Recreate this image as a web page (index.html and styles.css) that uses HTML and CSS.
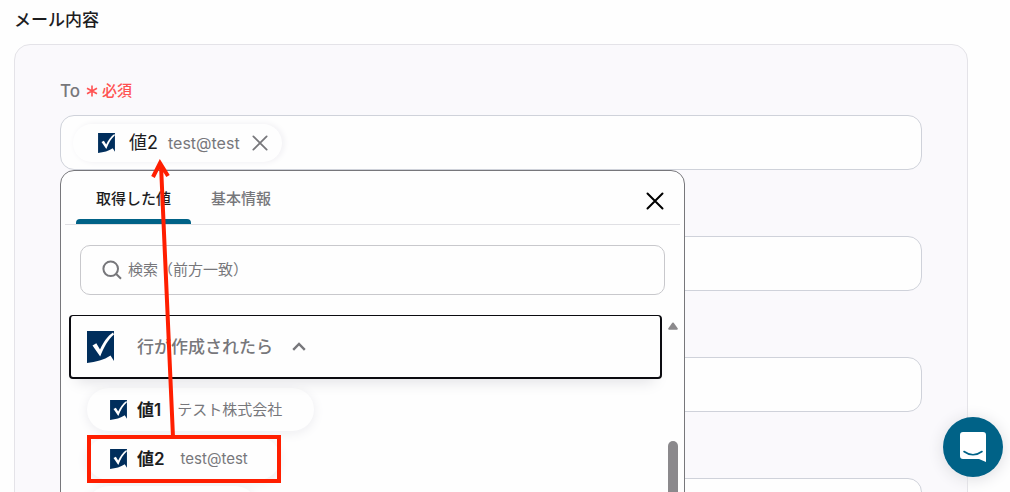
FILE: index.html
```html
<!DOCTYPE html>
<html lang="ja">
<head>
<meta charset="utf-8">
<meta name="viewport" content="width=device-width, initial-scale=1">
<title>メール内容</title>
<link rel="stylesheet" href="styles.css">
</head>
<body>
<svg class="defs" aria-hidden="true">
  <symbol id="logo" viewBox="0 0 27 32">
    <path fill="#002e5c" d="M0 0H27V30L23.500 24.500C17 29 9 31 0 32Z"/>
    <path fill="#fff" d="M5.500 14.500L9.300 12.200L13 18.500C16.500 11 20.500 5 26 1.500L27 3.500C21 8.500 17 16 13.200 25.500Z"/>
  </symbol>
  <symbol id="cross" viewBox="0 0 18 18">
    <path d="M1.500 1.500L16.500 16.500M16.500 1.500L1.500 16.500" fill="none" stroke="currentColor" stroke-width="2" stroke-linecap="round"/>
  </symbol>
</svg>
<main class="page">
  <h1 class="page-title">メール内容</h1>
  <form class="panel">
    <div class="field-label"><label for="to">To</label>
      <span class="required"><svg class="asterisk" viewBox="0 0 12 12" aria-hidden="true"><path d="M6 .5V11.500M1 3.200L11 8.800M11 3.200L1 8.800"/></svg>必須</span>
    </div>
    <div class="fields">
      <div class="field field-open">
        <div class="selected">
          <svg class="logo"><use href="#logo"/></svg>
          <span class="selected-name">値2</span>
          <span class="selected-value">test@test</span>
          <button class="remove" type="button" aria-label="削除"><svg><use href="#cross"/></svg></button>
        </div>
        <input class="bare" id="to" type="text">
        <section class="popup">
          <header class="popup-head">
            <div class="tabs" role="tablist">
              <button class="tab tab-active" type="button" role="tab" aria-selected="true">取得した値</button>
              <button class="tab" type="button" role="tab" aria-selected="false">基本情報</button>
            </div>
            <button class="close" type="button" aria-label="閉じる"><svg><use href="#cross"/></svg></button>
          </header>
          <label class="search">
            <svg class="search-icon" viewBox="0 0 20 20" aria-hidden="true"><path d="M16 8.800A7.300 7.300 0 1 1 1.400 8.800A7.300 7.300 0 1 1 16 8.800M14.200 14L19 18.800"/></svg>
            <input class="search-input" type="search" aria-label="検索" placeholder="検索（前方一致）">
          </label>
          <div class="results">
            <div class="result-list">
              <button class="group" type="button" aria-expanded="true">
                <svg class="group-logo"><use href="#logo"/></svg>
                <span>行が作成されたら</span>
                <svg class="chevron" viewBox="0 0 14 9" aria-hidden="true"><path d="M1.200 7.800L7 2L12.800 7.800"/></svg>
              </button>
              <div class="chips">
                <button class="chip" type="button"><svg class="logo"><use href="#logo"/></svg><b>値1</b><span>テスト株式会社</span></button>
                <button class="chip" type="button"><svg class="logo"><use href="#logo"/></svg><b>値2</b><span>test@test</span></button>
                <button class="chip chip-short" type="button" aria-label="次の値"></button>
              </div>
            </div>
            <div class="scrollbar" aria-hidden="true">
              <svg class="scroll-up" viewBox="0 0 10 8"><path d="M4.300 .8Q5 0 5.700 .8L9.800 6.500Q9.800 7.800 8.800 7.800H1.200Q.2 7.800 .2 6.500Z"/></svg>
              <div class="scroll-thumb"></div>
            </div>
          </div>
        </section>
      </div>
      <input class="field" type="text" aria-label="項目2">
      <input class="field" type="text" aria-label="項目3">
      <input class="field" type="text" aria-label="項目4">
    </div>
  </form>
</main>
<svg class="annotation" viewBox="0 0 300 492" aria-hidden="true">
  <path d="M173 437L161 165M153 177L160 163L168 176M89 437H279V481H89Z"/>
</svg>
<button class="chat" type="button" aria-label="チャット">
  <svg viewBox="0 0 28 32" aria-hidden="true"><path fill="#fff" d="M4 1H24Q27 1 27 4V31L20 28H4Q1 28 1 25V4Q1 1 4 1Z"/><path d="M5 20.500Q14 27 23 20.500" fill="none" stroke="#006287" stroke-width="1.600" stroke-linecap="round"/></svg>
</button>
</body>
</html>
```
FILE: styles.css
```css
* { box-sizing: border-box; }
body {
  margin: 0;
  height: 100vh;
  overflow: hidden;
  background: #fefefe;
  color: #1d1d1f;
  font: 15px/20px Inter, "Noto Sans CJK JP", sans-serif;
}
button, input { font: inherit; color: inherit; }
button { margin: 0; padding: 0; border: 0; background: none; cursor: pointer; }
input { min-width: 0; outline: 0; }
.defs { position: absolute; width: 0; height: 0; }
.page { padding: 8px 42px 0 14px; }
.page-title { margin: 0 0 12px; font-size: 17px; line-height: 24px; font-weight: 500; }
.panel {
  padding: 36px 45px 48px;
  border: 1px solid #e4e3e8;
  border-radius: 16px;
  background: #faf9fc;
}
.field-label { display: flex; align-items: center; gap: 6px; height: 20px; margin-bottom: 14px; color: #77777b; font-size: 17px; font-weight: 500; }
.required { display: flex; align-items: center; gap: 4px; color: #ff5252; font-size: 15px; font-weight: 500; }
.asterisk { width: 12px; height: 12px; fill: none; stroke: currentColor; stroke-width: 1.6; }
.fields { display: flex; flex-direction: column; gap: 66px; }
.field { width: 100%; height: 55px; border: 1px solid #cfd2da; border-radius: 14px; background: #fefefe; padding: 0 12px; }
.field-open { position: relative; display: flex; align-items: center; }
.bare { flex: 1; border: 0; background: none; }
.selected { display: flex; align-items: center; height: 38px; padding: 0 14px 0 25px; border-radius: 19px; box-shadow: 2px 0 6px #f0eff3; }
.logo { width: 17px; height: 20px; }
.selected-name { margin-left: 14px; font-size: 18px; }
.selected-value { margin-left: 10px; color: #77777b; font-size: 16px; }
.remove { margin-left: 12px; color: #77777b; }
.remove svg { display: block; width: 16px; height: 16px; }
.popup {
  position: absolute;
  z-index: 1;
  top: 54px;
  left: -1px;
  width: 625px;
  height: 420px;
  border: 1px solid #77777b;
  border-radius: 14px;
  background: #fefefe;
}
.popup-head { display: flex; justify-content: space-between; margin: 0 4px; padding: 0 16px 0 11px; border-bottom: 1px solid #e0e0e4; }
.tabs { display: flex; }
.tab { position: relative; height: 53px; padding: 2px 20px 0; color: #77777b; font-weight: 500; }
.tab-active { color: #1d1d1f; }
.tab-active::after { content: ""; position: absolute; right: 0; bottom: 0; left: 0; height: 5px; border-radius: 4px 4px 0 0; background: #006287; }
.close { padding-top: 6px; color: #000; }
.close svg { display: block; width: 18px; height: 18px; }
.search { display: flex; align-items: center; gap: 6px; height: 50px; margin: 20px 19px; padding: 0 20px 0 21px; border: 1px solid #c8c8cc; border-radius: 10px; }
.search-icon { width: 20px; height: 20px; fill: none; stroke: #77777b; stroke-width: 2; }
.search-input { flex: 1; padding: 0; border: 0; background: none; }
.search-input::placeholder { color: #77777b; opacity: 1; }
.results { display: flex; gap: 6px; height: 177px; margin-right: 6px; padding-left: 8px; }
.result-list { flex: 1; }
.group {
  position: relative;
  display: flex;
  align-items: center;
  width: 100%;
  height: 64px;
  padding: 0 16px;
  border: 2px solid #0b0b10;
  border-top-width: 1px;
  border-radius: 4px;
  background: #fefefe;
  box-shadow: 0 10px 16px -8px #dedee2;
  color: #77777b;
  font-size: 17px;
  font-weight: 500;
}
.group-logo { width: 27px; height: 32px; margin-right: 23px; }
.chevron { width: 14px; height: 9px; margin-left: 19px; fill: none; stroke: #77777b; stroke-width: 2.4; }
.chips { display: flex; flex-direction: column; align-items: flex-start; gap: 6px; padding: 9px 18px; }
.chip { display: flex; align-items: center; height: 43px; padding: 0 32px 0 23px; border-radius: 22px; background: #fefefe; box-shadow: 0 2px 12px #ececf0; color: #77777b; }
.chip b { margin: 0 16px 0 10px; color: #1d1d1f; font-size: 17px; font-weight: 600; }
.chip-short { width: 170px; }
.scrollbar { display: flex; flex-direction: column; gap: 111px; width: 10px; padding-top: 7px; }
.scroll-up { width: 10px; height: 8px; flex: none; fill: #8b898c; }
.scroll-thumb { flex: none; height: 120px; border-radius: 5px; background: #8b898c; }
.annotation { position: absolute; z-index: 2; top: 0; left: 0; width: 300px; height: 492px; fill: none; stroke: #ff1e00; stroke-width: 4; pointer-events: none; }
.chat { position: fixed; right: 7px; bottom: 15px; width: 60px; height: 60px; display: grid; place-items: center; border-radius: 50%; background: #006287; box-shadow: 0 2px 16px #dcdce0; }
.chat svg { width: 28px; height: 32px; }
```
